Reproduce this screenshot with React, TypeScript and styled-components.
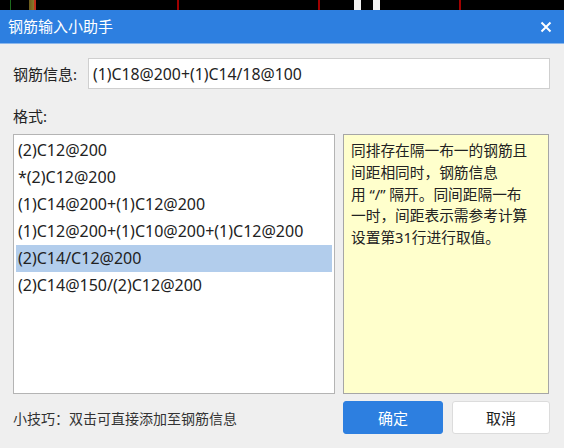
import React, { useState } from 'react';
import styled, { createGlobalStyle } from 'styled-components';

const GlobalStyle = createGlobalStyle`
  html, body {
    margin: 0;
    padding: 0;
    background: #efefef;
  }
  * {
    box-sizing: border-box;
  }
`;

const FONT = `"Noto Sans", "Noto Sans CJK SC", sans-serif`;

const formats = [
  '(2)C12@200',
  '*(2)C12@200',
  '(1)C14@200+(1)C12@200',
  '(1)C12@200+(1)C10@200+(1)C12@200',
  '(2)C14/C12@200',
  '(2)C14@150/(2)C12@200',
];

const helpLines = [
  '同排存在隔一布一的钢筋且',
  '间距相同时，钢筋信息',
  '用 “/” 隔开。同间距隔一布',
  '一时，间距表示需参考计算',
  '设置第31行进行取值。',
];

const App: React.FC = () => {
  const [selected, setSelected] = useState(4);
  const [value, setValue] = useState('(1)C18@200+(1)C14/18@100');

  return (
    <>
      <GlobalStyle />
      <Screen>
        {/* 뒤쪽 프로그램 화면의 일부 */}
        <BackStrip />
        <TitleBar>
          <Title>钢筋输入小助手</Title>
          <CloseButton aria-label="close">
            <svg width="12" height="12" viewBox="0 0 12 12">
              <path d="M1.5 1.5 L10.5 10.5 M10.5 1.5 L1.5 10.5" stroke="#fff" strokeWidth="2" fill="none" />
            </svg>
          </CloseButton>
        </TitleBar>
        <Body>
          <InfoRow>
            <FieldLabel>钢筋信息:</FieldLabel>
            <TextInput value={value} onChange={(e) => setValue(e.target.value)} />
          </InfoRow>
          <SectionLabel>格式:</SectionLabel>
          <Panels>
            <FormatList>
              {formats.map((f, i) => (
                <FormatItem
                  key={f}
                  $active={i === selected}
                  onClick={() => setSelected(i)}
                  onDoubleClick={() => setValue(f)}
                >
                  {f}
                </FormatItem>
              ))}
            </FormatList>
            <HelpBox>
              {helpLines.map((line) => (
                <HelpLine key={line}>{line}</HelpLine>
              ))}
            </HelpBox>
          </Panels>
          <Footer>
            <Tip>小技巧：双击可直接添加至钢筋信息</Tip>
            <Buttons>
              <DialogButton $primary>确定</DialogButton>
              <DialogButton>取消</DialogButton>
            </Buttons>
          </Footer>
        </Body>
      </Screen>
    </>
  );
};

const Screen = styled.div`
  width: 564px;
  height: 448px;
  background: #efefef;
  font-family: ${FONT};
  overflow: hidden;
`;

const BackStrip = styled.div`
  height: 10px;
  background:
    linear-gradient(to right,
      transparent 10px, #1d6b1d 10px, #1d6b1d 11px, transparent 11px,
      transparent 29px, #6b5a1c 29px, #8a7a2a 34px, #c0301c 34px, #c0301c 36px, transparent 36px,
      transparent 177px, #a00000 177px, #a00000 179px, transparent 179px,
      transparent 318px, #a00000 318px, #a00000 320px, transparent 320px,
      transparent 354px, #f2f2f2 354px, #f2f2f2 361px, transparent 361px,
      transparent 373px, #f2f2f2 373px, #f2f2f2 380px, transparent 380px,
      transparent 459px, #a00000 459px, #a00000 461px, transparent 461px),
    #000;
`;

const TitleBar = styled.div`
  height: 34px;
  background: #2d7fe0;
  border-bottom: 1px solid #8bb7ec;
  display: flex;
  align-items: center;
  justify-content: space-between;
  padding: 0 10px 0 8px;
`;

const Title = styled.div`
  color: #fff;
  font-size: 15px;
  line-height: 1;
`;

const CloseButton = styled.button`
  background: none;
  border: none;
  padding: 0;
  width: 16px;
  height: 16px;
  display: flex;
  align-items: center;
  justify-content: center;
  cursor: pointer;
`;

const Body = styled.div`
  padding: 14px 14px 0 13px;
  display: flex;
  flex-direction: column;
`;

const InfoRow = styled.div`
  display: flex;
  align-items: center;
  height: 31px;
`;

const FieldLabel = styled.div`
  width: 75px;
  font-size: 15px;
  color: #222;
`;

const TextInput = styled.input`
  flex: 1;
  height: 31px;
  border: 1px solid #cfcfcf;
  background: #fff;
  padding: 0 4px;
  font-family: ${FONT};
  font-size: 15.8px;
  color: #222;
  outline: none;
`;

const SectionLabel = styled.div`
  margin-top: 18px;
  height: 19px;
  font-size: 15px;
  line-height: 19px;
  color: #222;
`;

const Panels = styled.div`
  margin-top: 8px;
  display: flex;
  gap: 8px;
  height: 260px;
`;

const FormatList = styled.div`
  width: 322px;
  border: 1px solid #b4b4b4;
  background: #fff;
  padding: 2px 2px;
  display: flex;
  flex-direction: column;
`;

const FormatItem = styled.div<{ $active?: boolean }>`
  height: 27px;
  line-height: 27px;
  padding-left: 2px;
  font-size: 16px;
  color: #222;
  background: ${({ $active }) => ($active ? '#b2cdec' : 'transparent')};
  cursor: default;
  white-space: nowrap;
`;

const HelpBox = styled.div`
  width: 206px;
  border: 1px solid #a6a6a6;
  background: #ffffcc;
  padding: 5px 7px;
`;

const HelpLine = styled.div`
  font-size: 14.7px;
  line-height: 21.8px;
  color: #222;
  white-space: nowrap;
`;

const Footer = styled.div`
  margin-top: 7px;
  display: flex;
  align-items: center;
  justify-content: space-between;
`;

const Tip = styled.div`
  font-size: 14px;
  color: #333;
`;

const Buttons = styled.div`
  display: flex;
  gap: 9px;
`;

const DialogButton = styled.button<{ $primary?: boolean }>`
  width: ${({ $primary }) => ($primary ? '100px' : '98px')};
  height: 33px;
  border-radius: 3px;
  border: 1px solid ${({ $primary }) => ($primary ? '#2d7fe0' : '#dcdcdc')};
  background: ${({ $primary }) => ($primary ? '#2d7fe0' : '#fff')};
  color: ${({ $primary }) => ($primary ? '#fff' : '#222')};
  font-family: ${FONT};
  font-size: 15px;
  cursor: pointer;
`;

export default App;
